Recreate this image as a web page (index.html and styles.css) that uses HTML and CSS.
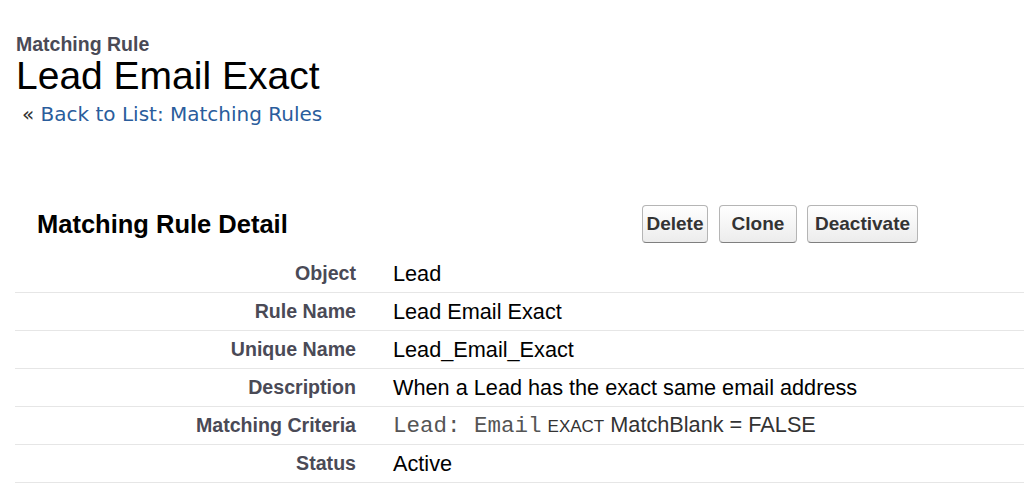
FILE: index.html
```html
<!DOCTYPE html>
<html lang="en">
<head>
    <meta charset="UTF-8">
    <meta name="viewport" content="width=device-width, initial-scale=1.0">
    <title>Matching Rule: Lead Email Exact</title>
    <link rel="stylesheet" href="styles.css">
</head>
<body>
    <div class="page-header">
        <h2 class="page-type">Matching Rule</h2>
        <h1 class="page-title">Lead Email Exact</h1>
        <div class="breadcrumb">&laquo;&nbsp;<a href="#">Back to List: Matching Rules</a></div>
    </div>

    <div class="detail-block">
        <div class="block-header">
            <h3 class="block-title">Matching Rule Detail</h3>
            <div class="block-buttons">
                <button type="button" class="btn btn-delete">Delete</button>
                <button type="button" class="btn btn-clone">Clone</button>
                <button type="button" class="btn btn-deactivate">Deactivate</button>
            </div>
        </div>
        <div class="detail-list">
            <div class="detail-row">
                <div class="label-col">Object</div>
                <div class="data-col">Lead</div>
            </div>
            <div class="detail-row">
                <div class="label-col">Rule Name</div>
                <div class="data-col">Lead Email Exact</div>
            </div>
            <div class="detail-row">
                <div class="label-col">Unique Name</div>
                <div class="data-col">Lead_Email_Exact</div>
            </div>
            <div class="detail-row">
                <div class="label-col">Description</div>
                <div class="data-col">When a Lead has the exact same email address</div>
            </div>
            <div class="detail-row">
                <div class="label-col">Matching Criteria</div>
                <div class="data-col criteria"><span class="field">Lead: Email</span> <span class="operator">EXACT</span> MatchBlank = FALSE</div>
            </div>
            <div class="detail-row">
                <div class="label-col">Status</div>
                <div class="data-col">Active</div>
            </div>
        </div>
    </div>
</body>
</html>
```

FILE: styles.css
```css
body {
    margin: 0;
    background-color: #fff;
    font-family: "Liberation Sans", Arial, sans-serif;
    color: #000;
}
.page-header {
    padding: 33px 0 0 16px;
}
.page-type {
    margin: 0;
    font-size: 19.5px;
    font-weight: bold;
    color: #4a4a56;
    line-height: 22px;
}
.page-title {
    margin: 0;
    font-size: 39px;
    font-weight: normal;
    line-height: 42px;
}
.breadcrumb {
    margin: 5px 0 0 6px;
    font-family: "DejaVu Sans", Verdana, sans-serif;
    font-size: 20px;
    color: #333;
}
.breadcrumb a {
    color: #2a5d9c;
    text-decoration: none;
}
.detail-block {
    margin: 73px 0 0 15px;
}
.block-header {
    display: flex;
    align-items: center;
    height: 50px;
}
.block-title {
    margin: 0;
    width: 605px;
    padding-left: 22px;
    font-size: 25.5px;
    font-weight: bold;
}
.block-buttons {
    display: flex;
}
.btn {
    height: 38px;
    padding: 0;
    font-family: "Liberation Sans", Arial, sans-serif;
    font-size: 19px;
    font-weight: bold;
    color: #333;
    background: linear-gradient(#fff, #ececec);
    border: 1px solid #b5b5b5;
    border-bottom-color: #7f7f7f;
    border-radius: 4px;
}
.btn-delete {
    width: 66px;
}
.btn-clone {
    width: 78px;
    margin-left: 11px;
}
.btn-deactivate {
    width: 111px;
    margin-left: 10px;
}
.detail-list {
    margin-top: 6px;
}
.detail-row {
    display: flex;
    align-items: center;
    height: 37px;
    border-bottom: 1px solid #e6e6e6;
}
.label-col {
    width: 341px;
    text-align: right;
    font-size: 19.6px;
    font-weight: bold;
    color: #4a4a56;
}
.data-col {
    padding-left: 37px;
    font-size: 21.7px;
    color: #000;
}
.criteria {
    color: #333;
}
.field {
    font-family: "Liberation Mono", "Courier New", monospace;
    font-size: 22.5px;
    color: #555;
}
.operator {
    font-size: 17px;
}
```
